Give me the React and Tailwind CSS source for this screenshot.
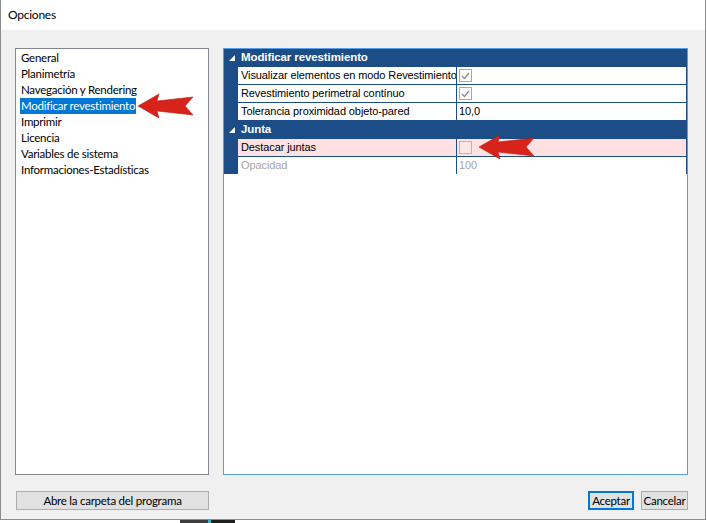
const Arrow = () => (
  <svg width="58" height="26" viewBox="0 0 58 26">
    <polygon
      points="1,13 22,1 20,8 56,4 48,13 56,22 20,18 22,25"
      fill="#d8231b"
      stroke="#b71a14"
      strokeWidth="0.6"
      strokeLinejoin="round"
    />
  </svg>
);

const Check = ({ checked, pink }) => (
  <div
    className={`w-[13px] h-[13px] border flex items-center justify-center ${
      pink ? "border-[#c9aeb0] bg-[#fde6e6]" : "border-[#a8a8a8] bg-white"
    }`}
  >
    {checked && (
      <svg width="9" height="8" viewBox="0 0 9 8">
        <path d="M1 4 L3.5 6.5 L8 1" fill="none" stroke="#8c8c8c" strokeWidth="1.4" />
      </svg>
    )}
  </div>
);

const Tri = () => (
  <svg width="6" height="6" viewBox="0 0 6 6" className="ml-[5px]">
    <polygon points="6,0 6,6 0,6" fill="#fff" />
  </svg>
);

const Category = ({ label }) => (
  <div className="flex items-center h-[17px] mb-[1px] bg-[#1c4d86]">
    <div className="w-[14px] flex items-center">
      <Tri />
    </div>
    <span className="pl-[3px] text-white font-bold text-[11.5px]">{label}</span>
  </div>
);

const Row = ({ name, children, pink, disabled }) => (
  <div className="flex h-[17px] mb-[1px]">
    <div className="w-[14px] bg-[#1c4d86]" />
    <div
      className={`w-[218px] pl-[3px] flex items-center whitespace-nowrap overflow-hidden ${
        pink ? "bg-[#ffe1e1]" : "bg-white"
      } ${disabled ? "text-[#a6a6a6]" : "text-black"}`}
    >
      {name}
    </div>
    <div className="w-[1px] bg-[#1c4d86]" />
    <div
      className={`flex-1 pl-[2px] flex items-center ${pink ? "bg-[#ffe1e1]" : "bg-white"} ${
        disabled ? "text-[#a6a6a6]" : "text-black"
      }`}
    >
      {children}
    </div>
  </div>
);

const items = [
  "General",
  "Planimetría",
  "Navegación y Rendering",
  "Modificar revestimiento",
  "Imprimir",
  "Licencia",
  "Variables de sistema",
  "Informaciones-Estadísticas",
];

export default function App() {
  return (
    <div
      className="w-[707px] h-[523px] bg-white overflow-hidden tracking-[-0.25px]"
      style={{ fontFamily: "Lato, 'Noto Sans', sans-serif" }}
    >
      <div className="w-[706px] h-[520px] border-l border-r border-b border-[#8c8c8c] flex flex-col">
        {/* title bar */}
        <div className="h-[30px] bg-white flex items-center pl-[7px] text-[12px] text-black">Opciones</div>

        {/* body */}
        <div className="flex-1 bg-[#f0f0f0] flex flex-col pl-[14px] pr-[17px] pt-[18px]">
          <div className="flex gap-[14px] h-[427px]">
            {/* list */}
            <div className="relative w-[194px] h-full border border-[#828790] bg-white pt-[1px] pl-[4px] text-[11.5px] leading-[16px] text-black">
              {items.map((it) => (
                <div key={it} className="h-[16px]">
                  <span
                    className={`inline-block px-[1px] h-[16px] ${
                      it === "Modificar revestimiento" ? "bg-[#0078d7] text-white" : ""
                    }`}
                  >
                    {it}
                  </span>
                </div>
              ))}
              <div className="absolute left-[121px] top-[44px]">
                <Arrow />
              </div>
            </div>

            {/* property grid */}
            <div
              className="relative w-[465px] h-full border border-[#569de5] bg-white text-[11px] tracking-[-0.1px]"
              style={{ fontFamily: "'Liberation Sans', Arial, sans-serif" }}
            >
              <div className="bg-[#1c4d86] pr-[1px]">
                <Category label="Modificar revestimiento" />
                <Row name="Visualizar elementos en modo Revestimiento">
                  <Check checked />
                </Row>
                <Row name="Revestimiento perimetral contínuo">
                  <Check checked />
                </Row>
                <Row name="Tolerancia proximidad objeto-pared">10,0</Row>
                <Category label="Junta" />
                <Row name="Destacar juntas" pink>
                  <Check pink />
                </Row>
                <Row name="Opacidad" disabled>
                  100
                </Row>
              </div>
              <div className="absolute left-[254px] top-[85px]">
                <Arrow />
              </div>
            </div>
          </div>

          {/* buttons */}
          <div className="flex items-start mt-[16px] text-[11.5px] text-black">
            <button className="ml-[1px] w-[193px] h-[19px] border border-[#adadad] bg-[#e1e1e1] flex items-center justify-center">
              Abre la carpeta del programa
            </button>
            <div className="flex-1" />
            <button className="w-[46px] h-[19px] border-2 border-[#0078d7] bg-[#e1e1e1] flex items-center justify-center">
              Aceptar
            </button>
            <button className="ml-[7px] w-[47px] h-[19px] border border-[#adadad] bg-[#e1e1e1] flex items-center justify-center">
              Cancelar
            </button>
          </div>
        </div>
      </div>
      <div className="flex h-[3px]">
        <div className="w-[180px]" />
        <div className="w-[28px] bg-[#3c3c3c]" />
        <div className="w-[3px] bg-[#2ab7c9]" />
        <div className="w-[24px] bg-[#1e1e1e]" />
      </div>
    </div>
  );
}
